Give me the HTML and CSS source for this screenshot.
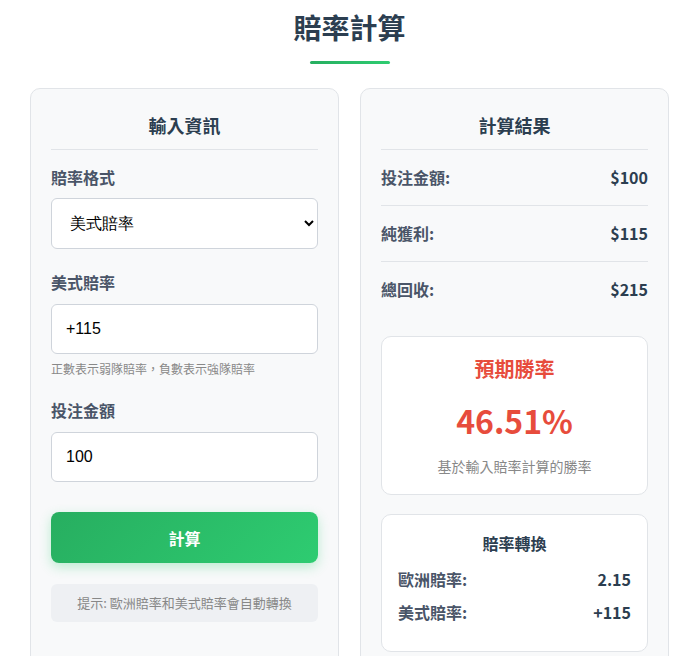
FILE: index.html
```html
<!DOCTYPE html>
<html lang="zh-Hant">
<head>
<meta charset="UTF-8">
<meta name="viewport" content="width=device-width, initial-scale=1.0">
<title>賠率計算</title>
<link rel="stylesheet" href="styles.css">
</head>
<body>
<h1 class="title">賠率計算</h1>
<div class="title-line"></div>

<div class="layout">
    <div class="card">
        <h2 class="card-title">輸入資訊</h2>

        <div class="field field-format">
            <label for="format">賠率格式</label>
            <select id="format" class="control">
                <option>美式賠率</option>
                <option>歐洲賠率</option>
            </select>
        </div>

        <div class="field field-odds">
            <label for="odds">美式賠率</label>
            <input id="odds" class="control" type="text" value="+115">
            <div class="field-hint">正數表示弱隊賠率，負數表示強隊賠率</div>
        </div>

        <div class="field field-stake">
            <label for="stake">投注金額</label>
            <input id="stake" class="control" type="text" value="100">
        </div>

        <button class="calc-btn">計算</button>

        <div class="tip">提示: 歐洲賠率和美式賠率會自動轉換</div>
    </div>

    <div class="card">
        <h2 class="card-title">計算結果</h2>

        <div class="results">
            <div class="result-row">
                <span>投注金額:</span>
                <span class="value">$100</span>
            </div>
            <div class="result-row">
                <span>純獲利:</span>
                <span class="value">$115</span>
            </div>
            <div class="result-row">
                <span>總回收:</span>
                <span class="value">$215</span>
            </div>
        </div>

        <div class="win-box">
            <div class="win-title">預期勝率</div>
            <div class="win-value">46.51%</div>
            <div class="win-note">基於輸入賠率計算的勝率</div>
        </div>

        <div class="convert-box">
            <div class="convert-title">賠率轉換</div>
            <div class="convert-row">
                <span>歐洲賠率:</span>
                <span class="value">2.15</span>
            </div>
            <div class="convert-row">
                <span>美式賠率:</span>
                <span class="value">+115</span>
            </div>
        </div>
    </div>
</div>
</body>
</html>
```

FILE: styles.css
```css
body {
  margin: 0;
  padding: 10px 8px 0 30px;
  background-color: #fff;
  color: #2c3e50;
  font-family: "Noto Sans CJK TC", "Noto Sans", sans-serif;
}

.title {
  margin: 0;
  font-size: 28px;
  line-height: 34px;
  font-weight: 700;
  text-align: center;
  color: #2c3e50;
}

.title-line {
  width: 80px;
  height: 3px;
  margin: 17px auto 0;
  border-radius: 2px;
  background: linear-gradient(90deg, #27ae60, #2ecc71);
}

.layout {
  margin-top: 24px;
  display: grid;
  grid-template-columns: 309px 309px;
  gap: 21px;
}

.card {
  background-color: #f8f9fa;
  border: 1px solid #e1e4e8;
  border-radius: 10px;
  padding: 20px;
}

.card-title {
  margin: 0;
  padding: 4px 0 12px;
  font-size: 18px;
  line-height: 24px;
  font-weight: 700;
  text-align: center;
  color: #2c3e50;
  border-bottom: 1px solid #e1e4e8;
}

/* form */
.field label {
  display: block;
  margin-bottom: 10px;
  font-size: 16px;
  line-height: 24px;
  font-weight: 600;
  color: #4a5568;
}

.field-format {
  margin-top: 15px;
}

.field-format label {
  margin-bottom: 9px;
}

.field-odds {
  margin-top: 21px;
}

.field-stake {
  margin-top: 20px;
}

.control {
  box-sizing: border-box;
  display: block;
  width: 100%;
  height: 50px;
  padding: 0 14px;
  font-size: 16px;
  color: #000;
  background-color: #fff;
  border: 1px solid #cfd4db;
  border-radius: 6px;
}

select.control {
  height: 51px;
}

.field-hint {
  margin-top: 6px;
  font-size: 12px;
  line-height: 18px;
  color: #888;
}

.calc-btn {
  display: block;
  width: 100%;
  height: 51px;
  margin-top: 30px;
  border: none;
  border-radius: 8px;
  background: linear-gradient(135deg, #27ae60, #2ecc71);
  box-shadow: 0 4px 12px rgba(46, 204, 113, 0.3);
  color: #fff;
  font-family: inherit;
  font-size: 16px;
  font-weight: 700;
  cursor: pointer;
}

.tip {
  margin-top: 21px;
  padding: 9px 10px;
  border-radius: 6px;
  background-color: #eef0f3;
  font-size: 13px;
  line-height: 20px;
  text-align: center;
  color: #888;
}

/* results */
.result-row {
  display: flex;
  justify-content: space-between;
  padding: 15px 0 16px;
  font-size: 16px;
  line-height: 24px;
  font-weight: 600;
  color: #4a5568;
  border-bottom: 1px solid #e1e4e8;
}

.result-row:last-child {
  border-bottom: none;
}

.value {
  font-weight: 700;
  color: #2c3e50;
}

.win-box {
  margin-top: 19px;
  padding: 19px 16px 18px;
  background-color: #fff;
  border: 1px solid #e1e4e8;
  border-radius: 10px;
  text-align: center;
}

.win-title {
  font-size: 20px;
  line-height: 26px;
  font-weight: 700;
  color: #e74c3c;
}

.win-value {
  margin-top: 17px;
  font-size: 32px;
  line-height: 42px;
  font-weight: 700;
  color: #e74c3c;
}

.win-note {
  margin-top: 15px;
  font-size: 14px;
  line-height: 20px;
  color: #888;
}

.convert-box {
  margin-top: 19px;
  padding: 16px 16px 22px;
  background-color: #fff;
  border: 1px solid #e1e4e8;
  border-radius: 10px;
}

.convert-title {
  margin-bottom: 8px;
  font-size: 16px;
  line-height: 24px;
  font-weight: 700;
  text-align: center;
  color: #2c3e50;
}

.convert-row {
  display: flex;
  justify-content: space-between;
  padding: 4px 0 5px;
  font-size: 16px;
  line-height: 24px;
  font-weight: 600;
  color: #4a5568;
}
```
